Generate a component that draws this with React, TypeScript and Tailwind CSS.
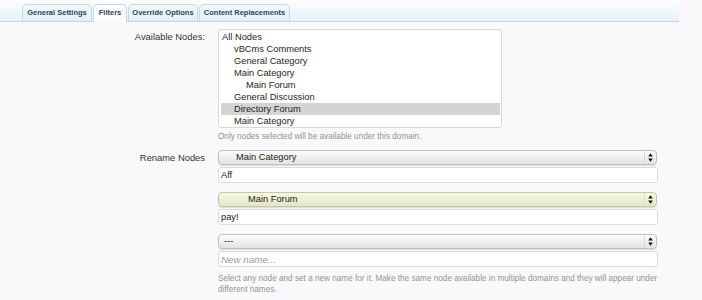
import React from "react";

type Node = { label: string; depth: number; selected?: boolean };

const nodes: Node[] = [
  { label: "All Nodes", depth: 0 },
  { label: "vBCms Comments", depth: 1 },
  { label: "General Category", depth: 1 },
  { label: "Main Category", depth: 1 },
  { label: "Main Forum", depth: 2 },
  { label: "General Discussion", depth: 1 },
  { label: "Directory Forum", depth: 1, selected: true },
  { label: "Main Category", depth: 1 },
];

function Arrows() {
  return (
    <svg width="5" height="9" viewBox="0 0 5 9" className="block">
      <polygon points="2.5,0.3 4.8,3.6 0.2,3.6" fill="#111" />
      <polygon points="0.2,5.4 4.8,5.4 2.5,8.7" fill="#111" />
    </svg>
  );
}

function FakeSelect({ text, indent, yellow }: { text: string; indent: number; yellow?: boolean }) {
  return (
    <div
      className={
        yellow
          ? "flex h-[15px] w-[439px] items-center rounded-[4px] border border-[#c4c7a4] bg-gradient-to-b from-[#f7f9e4] to-[#e4e7c3] shadow-[0_1px_1px_rgba(0,0,0,0.12)]"
          : "flex h-[15px] w-[439px] items-center rounded-[4px] border border-[#c2c2c2] bg-gradient-to-b from-[#fdfdfd] to-[#e3e3e3] shadow-[0_1px_1px_rgba(0,0,0,0.12)]"
      }
    >
      <div className="flex-1 truncate text-[9.3px] leading-[13px] text-[#222]" style={{ paddingLeft: indent }}>
        {text}
      </div>
      <div className="flex h-full w-[12px] items-center justify-center border-l border-[#d9d9d9]">
        <Arrows />
      </div>
    </div>
  );
}

function FakeInput({ value, placeholder }: { value?: string; placeholder?: string }) {
  return (
    <div className="mt-[2px] flex h-[16px] w-[440px] items-center rounded-[3px] border border-[#dcdcdc] bg-white pl-[2px]">
      {value ? (
        <span className="text-[9.3px] leading-[13px] text-[#222]">{value}</span>
      ) : (
        <span className="text-[9.8px] italic leading-[13px] text-[#9a9a9a]">{placeholder}</span>
      )}
    </div>
  );
}

export default function App() {
  return (
    <div className="min-h-[300px] w-full bg-[#f9f9fb] font-['Liberation_Sans',Arial,sans-serif] text-[#333]">
      <div className="flex h-[22px] w-[679px] items-end gap-[1px] border-b border-[#c3d4e1] bg-gradient-to-b from-[#fdfeff] to-[#e5f2f9] pl-[22px]">
        <div className="h-[17px] w-[70px] rounded-t-[5px] border border-b-0 border-[#c4d9e6] bg-gradient-to-b from-[#f2f9fc] to-[#e0eff7] text-center text-[7.5px] font-bold leading-[16px] text-[#2f4658]">
          General Settings
        </div>
        <div className="-mb-px h-[18px] w-[34px] rounded-t-[5px] border border-b-0 border-[#c4d9e6] bg-[#fbfdfe] text-center text-[7.5px] font-bold leading-[16px] text-[#2f4658]">
          Filters
        </div>
        <div className="h-[17px] w-[70px] rounded-t-[5px] border border-b-0 border-[#c4d9e6] bg-gradient-to-b from-[#f2f9fc] to-[#e0eff7] text-center text-[7.5px] font-bold leading-[16px] text-[#2f4658]">
          Override Options
        </div>
        <div className="h-[17px] w-[91px] rounded-t-[5px] border border-b-0 border-[#c4d9e6] bg-gradient-to-b from-[#f2f9fc] to-[#e0eff7] text-center text-[7.5px] font-bold leading-[16px] text-[#2f4658]">
          Content Replacements
        </div>
      </div>

      <div className="mt-[7px] flex">
        <div className="w-[205px] pt-[2px] text-right text-[9.4px] leading-[12px] text-[#333]">Available Nodes:</div>
        <div className="ml-[13px]">
          <div className="h-[99px] w-[284px] overflow-hidden rounded-[3px] border border-[#d8d8d8] bg-white pl-[2px] pr-[1px] pt-[1px]">
            {nodes.map((n, i) => (
              <div
                key={i}
                className={
                  n.selected
                    ? "h-[12px] whitespace-nowrap bg-[#d4d4d4] text-[9.3px] leading-[12px] text-[#1e1e1e]"
                    : "h-[12px] whitespace-nowrap text-[9.3px] leading-[12px] text-[#1e1e1e]"
                }
                style={{ paddingLeft: 1 + n.depth * 12 }}
              >
                {n.label}
              </div>
            ))}
          </div>
          <div className="mt-[3px] text-[8.2px] leading-[11px] text-[#939393]">
            Only nodes selected will be available under this domain.
          </div>
        </div>
      </div>

      <div className="mt-[8px] flex">
        <div className="w-[205px] text-right text-[9.4px] leading-[15px] text-[#333]">Rename Nodes</div>
        <div className="ml-[13px] w-[440px]">
          <FakeSelect text="Main Category" indent={17} />
          <FakeInput value="Aff" />
          <div className="mt-[9px]">
            <FakeSelect text="Main Forum" indent={29} yellow />
            <FakeInput value="pay!" />
          </div>
          <div className="mt-[9px]">
            <FakeSelect text="---" indent={5} />
            <FakeInput placeholder="New name..." />
          </div>
          <div className="mt-[7px] text-[8.2px] leading-[10.5px] text-[#939393]">
            Select any node and set a new name for it. Make the same node available in multiple domains and they will appear under different names.
          </div>
        </div>
      </div>
    </div>
  );
}
